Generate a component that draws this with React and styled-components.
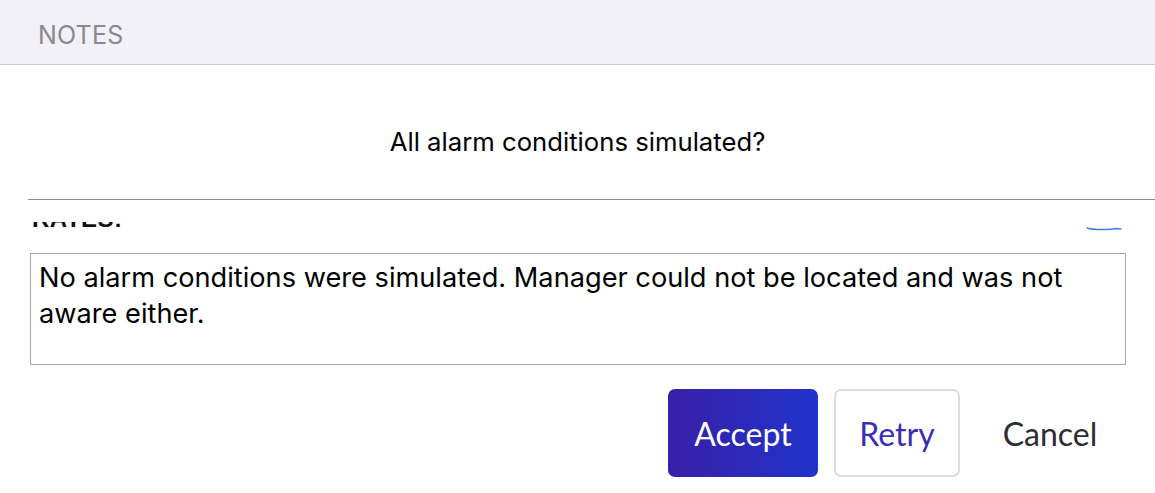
import React from "react";
import styled, { createGlobalStyle } from "styled-components";

const Global = createGlobalStyle`
    html, body {
        margin: 0;
        padding: 0;
        background: #ffffff;
    }
    body {
        font-family: "Inter", "Liberation Sans", sans-serif;
        color: #000000;
    }
`

const Page = styled.div`
    width: 1155px;
    height: 493px;
    overflow: hidden;
    display: flex;
    flex-direction: column;
`

const Header = styled.div`
    height: 65px;
    background: #f2f1f7;
    border-bottom: 1px solid #c8c7cc;
    display: flex;
    align-items: center;
    padding-left: 38px;
    padding-top: 6px;
    box-sizing: border-box;
    flex-shrink: 0;
`

const HeaderTitle = styled.span`
    font-size: 25px;
    color: #8a898f;
    letter-spacing: 0.2px;
`

const Question = styled.div`
    height: 135px;
    display: flex;
    align-items: center;
    justify-content: center;
    font-size: 25.7px;
    padding-top: 18px;
    box-sizing: border-box;
    border-bottom: 1px solid #8e8e8e;
    margin-left: 28px;
    padding-right: 28px;
    flex-shrink: 0;
`

const LabelRow = styled.div`
    height: 53px;
    display: flex;
    align-items: flex-start;
    justify-content: space-between;
    padding: 22px 33px 0 32px;
    box-sizing: border-box;
    flex-shrink: 0;
`

const ClippedLabel = styled.div`
    height: 8px;
    overflow: hidden;
`

const LabelText = styled.div`
    font-family: "Liberation Sans", sans-serif;
    font-weight: 700;
    font-size: 24px;
    line-height: 24px;
    margin-top: -15px;
    color: #111111;
    letter-spacing: 0.5px;
`

const SearchEdge = styled.svg`
    margin-top: 3px;
`

const NoteBox = styled.div`
    margin-left: 30px;
    width: 1096px;
    height: 112px;
    border: 1px solid #a9a9a9;
    box-sizing: border-box;
    padding: 6px 8px;
    font-size: 27.2px;
    line-height: 36px;
    color: #000000;
    flex-shrink: 0;
`

const Actions = styled.div`
    display: flex;
    justify-content: flex-end;
    align-items: center;
    gap: 16px;
    padding: 24px 31px 0 0;
`

const Button = styled.button`
    height: 88px;
    padding: 0;
    border-radius: 7px;
    font-family: "Lato", "Liberation Sans", sans-serif;
    font-size: 32px;
    cursor: pointer;
    box-sizing: border-box;
    flex-shrink: 0;
    ${({ $variant }) => $variant === "primary" && `
        background: linear-gradient(90deg, #391fa7 0%, #2133cb 100%);
        color: #ffffff;
        border: none;
        width: 150px;
    `}
    ${({ $variant }) => $variant === "outline" && `
        background: #ffffff;
        color: #3a2db6;
        border: 2px solid #dcdbe2;
        width: 126px;
    `}
    ${({ $variant }) => $variant === "text" && `
        background: transparent;
        color: #2d2c35;
        border: none;
        width: 148px;
    `}
`

function App() {
    return (
        <Page>
            <Global />
            <Header>
                <HeaderTitle>NOTES</HeaderTitle>
            </Header>
            <Question>All alarm conditions simulated?</Question>
            <LabelRow>
                <ClippedLabel>
                    <LabelText>RATES:</LabelText>
                </ClippedLabel>
                <SearchEdge width="36" height="8" viewBox="0 0 36 8">
                    <path d="M1 3 C 8 5, 24 5, 30 3.5 L 35 4" fill="none" stroke="#3d7fe0" strokeWidth="1.4" strokeLinecap="round" />
                </SearchEdge>
            </LabelRow>
            <NoteBox>
                No alarm conditions were simulated. Manager could not be located and was not aware either.
            </NoteBox>
            <Actions>
                <Button $variant="primary">Accept</Button>
                <Button $variant="outline">Retry</Button>
                <Button $variant="text">Cancel</Button>
            </Actions>
        </Page>
    );
}

export default App;
